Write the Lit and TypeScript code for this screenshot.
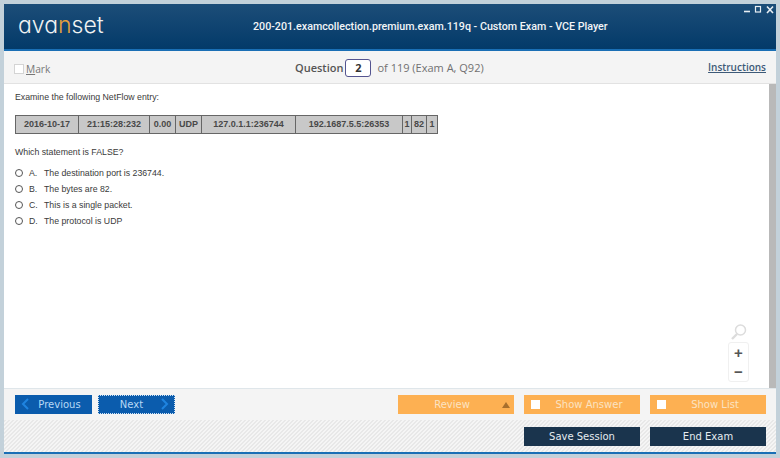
import { LitElement, html, css } from 'lit';
import { customElement } from 'lit/decorators.js';

const cells = [
  { text: '2016-10-17', width: 63 },
  { text: '21:15:28:232', width: 71 },
  { text: '0.00', width: 26 },
  { text: 'UDP', width: 26 },
  { text: '127.0.1.1:236744', width: 94 },
  { text: '192.1687.5.5:26353', width: 107 },
  { text: '1', width: 9 },
  { text: '82', width: 15 },
  { text: '1', width: 10 },
];

const answers = [
  ['A.', 'The destination port is 236744.'],
  ['B.', 'The bytes are 82.'],
  ['C.', 'This is a single packet.'],
  ['D.', 'The protocol is UDP'],
];

@customElement('app-root')
export class AppRoot extends LitElement {
  render() {
    return html`
      <div class="window">
        <header class="header">
          <div class="logo">ava<span class="logo__n">n</span>set</div>
          <div class="header__title">200-201.examcollection.premium.exam.119q - Custom Exam - VCE Player</div>
          <div class="controls">
            <svg width="30" height="10" viewBox="0 0 30 10" fill="none" stroke="#e8eef3">
              <path d="M0 6.5h6" stroke-width="1.6" />
              <rect x="11.5" y="1.5" width="5" height="5.5" stroke-width="1.2" />
              <path d="M23 1.5l6 6.5M29 1.5l-6 6.5" stroke-width="1.6" />
            </svg>
          </div>
        </header>
        <div class="toolbar">
          <label class="mark"><span class="mark__box"></span><span class="mark__text"><u>M</u>ark</span></label>
          <div class="question">
            <b>Question</b>
            <span class="question__input">2</span>
            <span>of 119 (Exam A, Q92)</span>
          </div>
          <a class="instructions">Instructions</a>
        </div>
        <div class="body">
          <main class="content">
            <p class="intro">Examine the following NetFlow entry:</p>
            <div class="flow">
              ${cells.map((c) => html`<div class="flow__cell" style="width:${c.width}px">${c.text}</div>`)}
            </div>
            <p class="prompt">Which statement is FALSE?</p>
            <div class="answers">
              ${answers.map(
                ([letter, text]) => html`
                  <div class="answer">
                    <span class="radio"></span>
                    <span class="answer__letter">${letter}</span>
                    <span>${text}</span>
                  </div>
                `
              )}
            </div>
            <div class="zoom">
              <svg width="18" height="18" viewBox="0 0 18 18" fill="none" stroke="#dcdcdc">
                <circle cx="10.5" cy="7" r="5" stroke-width="1.5" />
                <path d="M7 11l-5 5" stroke-width="2.4" />
              </svg>
              <div class="zoom__box">
                <span class="zoom__btn">+</span>
                <span class="zoom__btn">−</span>
              </div>
            </div>
          </main>
          <div class="scrollbar"></div>
        </div>
        <div class="nav">
          <button class="btn btn--blue btn--prev">
            <svg class="chev chev--left" width="8" height="12" viewBox="0 0 8 12" fill="none" stroke="#1f84e0" stroke-width="2"><path d="M7 1L2 6l5 5" /></svg>
            Previous
          </button>
          <button class="btn btn--blue btn--next">
            Next
            <svg class="chev chev--right" width="8" height="12" viewBox="0 0 8 12" fill="none" stroke="#1f84e0" stroke-width="2"><path d="M1 1l5 5-5 5" /></svg>
          </button>
          <span class="spacer"></span>
          <button class="btn btn--orange btn--review">
            Review
            <span class="triangle"></span>
          </button>
          <button class="btn btn--orange btn--toggle"><span class="check"></span>Show Answer</button>
          <button class="btn btn--orange btn--toggle"><span class="check"></span>Show List</button>
        </div>
        <div class="actions">
          <button class="btn btn--dark">Save Session</button>
          <button class="btn btn--dark">End Exam</button>
        </div>
      </div>
    `;
  }

  static styles = [
    css`
      :host {
        display: block;
        width: 780px;
        height: 458px;
        overflow: hidden;
        background: #c3d1da;
      }

      .window {
        display: flex;
        flex-direction: column;
        height: 100%;
        box-sizing: border-box;
        padding: 4px;
      }

      .header {
        position: relative;
        display: flex;
        align-items: center;
        height: 47px;
        flex: none;
        box-sizing: border-box;
        padding-left: 14px;
        background: linear-gradient(#1c4d78, #033a69);
        border-bottom: 2px solid #1a6fb5;
      }

      .logo {
        width: 235px;
        margin-top: -3px;
        font-family: 'Inter', sans-serif;
        font-feature-settings: 'cv11' 1;
        font-size: 23px;
        font-weight: 300;
        color: #f0f2f2;
      }

      .logo__n {
        color: #e8a13c;
      }

      .header__title {
        font-family: 'Roboto', sans-serif;
        font-size: 10.7px;
        font-weight: 500;
        color: #f2f5f7;
      }

      .controls {
        position: absolute;
        top: 1px;
        right: 2px;
        line-height: 0;
      }

      .toolbar {
        position: relative;
        display: flex;
        align-items: center;
        justify-content: space-between;
        height: 33px;
        flex: none;
        box-sizing: border-box;
        padding: 0 10px;
        background: #f4f4f4;
        border-bottom: 1px solid #e2e2e2;
        font-family: 'Open Sans', sans-serif;
        color: #6b6b6b;
      }

      .mark {
        display: flex;
        align-items: center;
        gap: 2px;
        margin-top: 3px;
        color: #777;
        font-size: 10.2px;
      }

      .mark__box {
        width: 8px;
        height: 8px;
        background: #fff;
        border: 1px solid #d4d4d4;
      }

      .question {
        position: absolute;
        left: 291px;
        display: flex;
        align-items: center;
        gap: 5px;
        font-size: 11px;
        color: #717171;
      }

      .question b {
        margin-right: -3px;
        font-weight: 600;
        color: #555;
      }

      .question__input {
        box-sizing: border-box;
        width: 26px;
        height: 18px;
        margin-top: 2px;
        margin-right: 1px;
        border: 1px solid #545490;
        border-radius: 3px;
        background: #fff;
        text-align: center;
        font-weight: 700;
        line-height: 16px;
        color: #333;
      }

      .instructions {
        font-size: 10px;
        font-weight: 600;
        color: #3d5a78;
        text-decoration: underline;
      }

      .body {
        display: flex;
        flex: 1;
        min-height: 0;
      }

      .content {
        position: relative;
        flex: 1;
        box-sizing: border-box;
        padding: 7px 0 0 11px;
        background: #fff;
        font-family: 'Liberation Sans', sans-serif;
        font-size: 8.75px;
        color: #3a3a3a;
      }

      .intro,
      .prompt {
        margin: 0;
        line-height: 12px;
      }

      .flow {
        display: flex;
        width: fit-content;
        margin: 12px 0 0;
        border: 1px solid #666;
        background: #c8c8c8;
      }

      .flow__cell {
        box-sizing: border-box;
        height: 17px;
        border-right: 1px solid #666;
        text-align: center;
        font-size: 9px;
        font-weight: 700;
        line-height: 17px;
        color: #484848;
        white-space: nowrap;
      }

      .flow__cell:last-child {
        border-right: none;
      }

      .prompt {
        margin-top: 12px;
      }

      .answers {
        display: flex;
        flex-direction: column;
        gap: 4px;
        margin-top: 9px;
      }

      .answer {
        display: flex;
        align-items: center;
        height: 12px;
      }

      .radio {
        width: 6px;
        height: 6px;
        margin-right: 6px;
        border: 1px solid #555;
        border-radius: 50%;
        background: #fff;
      }

      .answer__letter {
        width: 15px;
      }

      .zoom {
        position: absolute;
        top: 239px;
        right: 20px;
        display: flex;
        flex-direction: column;
        align-items: center;
        gap: 1px;
      }

      .zoom__box {
        display: flex;
        flex-direction: column;
        box-sizing: border-box;
        width: 21px;
        height: 40px;
        border: 1px solid #f0f0f0;
        border-radius: 3px;
      }

      .zoom__btn {
        flex: 1;
        text-align: center;
        font-family: 'Liberation Sans', sans-serif;
        font-size: 15px;
        font-weight: 700;
        line-height: 19px;
        color: #555;
      }

      .scrollbar {
        width: 7px;
        background: #b9b9b9;
      }

      .nav {
        display: flex;
        align-items: center;
        gap: 6px;
        height: 32px;
        flex: none;
        box-sizing: border-box;
        padding: 0 10px 0 11px;
        background: #f4f4f4;
        border-top: 1px solid #dfe6ea;
      }

      .spacer {
        flex: 1;
      }

      .actions {
        display: flex;
        justify-content: flex-end;
        align-items: flex-start;
        gap: 10px;
        height: 34px;
        flex: none;
        box-sizing: border-box;
        padding: 7px 10px 0 0;
        background-color: #f5f5f5;
        background-image: linear-gradient(
          135deg,
          #e8e8e8 25%,
          #f5f5f5 25%,
          #f5f5f5 50%,
          #e8e8e8 50%,
          #e8e8e8 75%,
          #f5f5f5 75%
        );
        background-size: 4px 4px;
        border-bottom: 2px solid #1a6fb5;
      }

      .btn {
        position: relative;
        display: flex;
        align-items: center;
        justify-content: center;
        box-sizing: border-box;
        padding: 0;
        border: none;
        font-family: 'DejaVu Sans', sans-serif;
        font-size: 10px;
      }

      .btn--blue {
        width: 77px;
        height: 19px;
        background: #0b5cad;
        color: #b7d8f5;
      }

      .btn--prev {
        padding-left: 12px;
      }

      .btn--next {
        padding-right: 10px;
        outline: 1px dotted #cfe3f5;
        outline-offset: -1px;
      }

      .chev {
        position: absolute;
        top: 3px;
      }

      .chev--left {
        left: 6px;
      }

      .chev--right {
        right: 6px;
      }

      .btn--orange {
        width: 116px;
        height: 19px;
        margin-left: 4px;
        background: #fdb052;
        color: #fbe3c2;
      }

      .btn--review {
        padding-right: 8px;
      }

      .btn--toggle {
        padding-left: 14px;
      }

      .triangle {
        position: absolute;
        right: 4px;
        top: 7px;
        width: 0;
        height: 0;
        border: 4px solid transparent;
        border-top: none;
        border-bottom: 6px solid #a86f2c;
      }

      .check {
        position: absolute;
        left: 7px;
        top: 5px;
        width: 9px;
        height: 9px;
        background: #fff;
      }

      .btn--dark {
        width: 116px;
        height: 19px;
        background: #1a344d;
        color: #e6ecf0;
      }
    `,
  ];
}

declare global {
  interface HTMLElementTagNameMap {
    'app-root': AppRoot;
  }
}
